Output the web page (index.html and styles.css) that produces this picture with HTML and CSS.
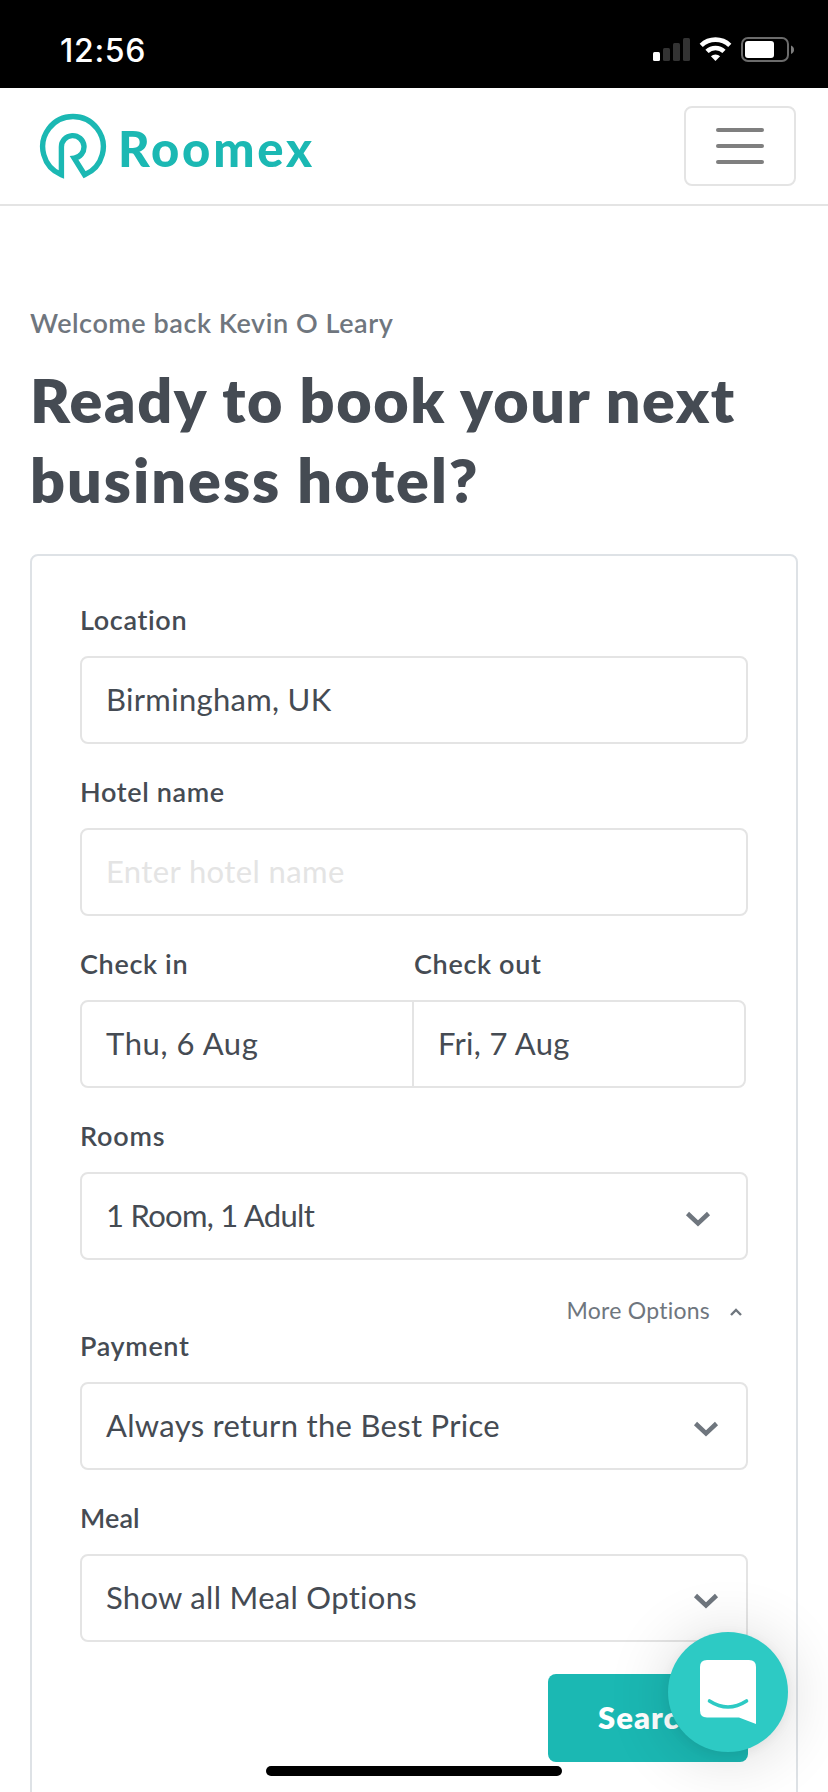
FILE: index.html
```html
<!DOCTYPE html>
<html lang="en">
<head>
<meta charset="utf-8">
<title>Roomex</title>
<link rel="stylesheet" href="styles.css">
</head>
<body>
<div class="status">
  <span class="clock">12:56</span>
  <svg class="status-icons" width="144" height="28" viewBox="0 0 144 28">
    <rect x="1" y="16" width="7" height="9" rx="1.5" fill="#fff"/>
    <g fill="#333"><rect x="11" y="12" width="7" height="13" rx="1.5"/><rect x="21" y="7" width="7" height="18" rx="1.5"/><rect x="31" y="2" width="7" height="23" rx="1.5"/></g>
    <g fill="none" stroke="#fff" stroke-width="4.6"><path d="M49.2 9.3a20.8 20.8 0 0 1 28.6 0"/><path d="M55 15.4a12.2 12.2 0 0 1 17 0"/></g>
    <path d="M63.5 25l-4.6-4.8a6.8 6.8 0 0 1 9.2 0z" fill="#fff"/>
    <rect x="90" y="2" width="46" height="23" rx="6" fill="none" stroke="#6b6b6b" stroke-width="2"/>
    <rect x="93" y="5" width="29" height="17" rx="3" fill="#fff"/>
    <path d="M139 9.5q3 1.2 3 4.200t-3 4.200z" fill="#7d7d7d"/>
  </svg>
</div>
<header class="nav">
  <div class="brand">
    <svg class="brand-mark" width="68" height="66" viewBox="0 0 68 66" fill="none" stroke="#1bb8b3" stroke-width="5.400"><path d="M22.400 61.800A30.300 30.300 0 1 1 45.600 61.800L35.200 45.100A11.300 11.300 0 1 0 22.400 34z"/></svg>
    <span class="brand-name">Roomex</span>
  </div>
  <button class="menu" aria-label="Menu"><i></i><i></i><i></i></button>
</header>
<main>
  <p class="welcome">Welcome back Kevin O Leary</p>
  <h1><span>Ready to book your next</span><br><span class="line2">business hotel?</span></h1>
  <form class="card">
    <div class="group"><label>Location</label><div class="field"><span>Birmingham, UK</span></div></div>
    <div class="group"><label>Hotel name</label><div class="field hint"><span>Enter hotel name</span></div></div>
    <div class="group">
      <div class="pair"><label>Check in</label><label>Check out</label></div>
      <div class="field dates"><span class="date">Thu, 6 Aug</span><span class="date t-out">Fri, 7 Aug</span></div>
    </div>
    <div class="group"><label class="t-rooms">Rooms</label><div class="field rooms"><span class="t-room">1 Room, 1 Adult</span><svg class="chev" width="24" height="14" viewBox="0 0 24 14"><path d="M1.500 1.500L12 11.500L22.500 1.500"/></svg></div></div>
    <div class="more"><span>More Options</span><svg width="12" height="8" viewBox="0 0 12 8"><path d="M1 7L6 2L11 7"/></svg></div>
    <div class="group"><label>Payment</label><div class="field"><span>Always return the Best Price</span><svg class="chev" width="24" height="14" viewBox="0 0 24 14"><path d="M1.500 1.500L12 11.500L22.500 1.500"/></svg></div></div>
    <div class="group"><label class="t-meal">Meal</label><div class="field"><span>Show all Meal Options</span><svg class="chev" width="24" height="14" viewBox="0 0 24 14"><path d="M1.500 1.500L12 11.500L22.500 1.500"/></svg></div></div>
    <div class="actions"><button class="search" type="button">Search</button></div>
  </form>
</main>
<div class="chat">
  <svg width="56" height="64" viewBox="0 0 56 64"><path d="M7 0H49Q56 0 56 7V64L39 57.500H7Q0 57.500 0 50.500V7Q0 0 7 0z" fill="#fff"/><path d="M9.500 41Q28 53 46.500 41" fill="none" stroke="#2dcac4" stroke-width="3.600" stroke-linecap="round"/></svg>
</div>
<div class="home-bar"></div>
</body>
</html>
```
FILE: styles.css
```css
* { box-sizing: border-box; }
body {
  position: relative;
  margin: 0;
  width: 828px;
  height: 1792px;
  overflow: hidden;
  background: #fff;
  color: #454b53;
  font-family: Lato, "Liberation Sans", sans-serif;
}
.status {
  display: flex;
  justify-content: space-between;
  align-items: flex-start;
  height: 88px;
  padding: 36px 32px 0 60px;
  background: #000;
  color: #fff;
}
.clock {
  font: 500 32px/29px Inter, sans-serif;
  letter-spacing: 0.7px;
}
.nav {
  display: flex;
  justify-content: space-between;
  align-items: center;
  height: 118px;
  padding: 0 32px 0 39px;
  border-bottom: 2px solid #e4e4e4;
}
.brand { display: flex; align-items: center; gap: 11px; color: #1bb8b3; }
.brand-name {
  padding-top: 3px;
  font: 900 49px/60px Lato, sans-serif;
  letter-spacing: 2.800px;
}
.menu {
  display: flex;
  flex-direction: column;
  align-items: center;
  justify-content: center;
  gap: 12px;
  width: 112px;
  height: 80px;
  padding: 0;
  border: 2px solid #e4e4e4;
  border-radius: 8px;
  background: #fff;
}
.menu i { width: 48px; height: 4px; border-radius: 2px; background: #7f7f7f; }
main { padding: 98px 30px 0; }
.welcome {
  margin: 0;
  color: #6f767e;
  font-size: 27px;
  font-weight: 600;
  line-height: 38px;
  letter-spacing: 0.550px;
}
h1 {
  margin: 18px 0 34px;
  font-size: 61px;
  font-weight: 800;
  line-height: 80px;
  letter-spacing: 1.560px;
  white-space: nowrap;
}
.line2 { letter-spacing: 2px; }
.card {
  height: 1300px;
  padding: 44px 48px;
  border: 2px solid #dee2e6;
  border-radius: 8px;
}
.group { margin-bottom: 28px; }
label {
  display: block;
  margin-bottom: 16px;
  font-size: 27px;
  font-weight: 600;
  line-height: 40px;
  letter-spacing: 0.650px;
}
.field {
  display: flex;
  align-items: center;
  justify-content: space-between;
  height: 88px;
  padding: 0 28px 0 24px;
  border: 2px solid #e4e4e4;
  border-radius: 8px;
  background: #fff;
  font-size: 31px;
  letter-spacing: 0.300px;
}
.field span { padding-bottom: 2px; }
.hint { color: #e4e4e4; letter-spacing: 0.400px; }
.rooms { padding-right: 36px; }
.pair { display: grid; grid-template-columns: 1fr 1fr; }
.dates { width: 666px; padding: 0; align-items: stretch; }
.date { display: flex; align-items: center; flex: 1; padding-left: 24px; letter-spacing: 0.600px; }
.date + .date { border-left: 2px solid #e4e4e4; }
.t-out { letter-spacing: 0.300px; }
.t-room { letter-spacing: -0.700px; }
.t-rooms { letter-spacing: 0.800px; }
.t-meal { letter-spacing: 0.100px; }
.chev { margin-top: 6px; overflow: visible; fill: none; stroke: #6f767e; stroke-width: 4.500; }
.more {
  display: flex;
  justify-content: flex-end;
  align-items: center;
  gap: 20px;
  height: 38px;
  padding: 5px 6px 0 0;
  color: #6f767e;
  font-size: 23px;
  letter-spacing: 0.250px;
}
.more svg { margin-top: 4px; overflow: visible; fill: none; stroke: #6f767e; stroke-width: 2.400; }
.actions { display: flex; justify-content: flex-end; margin-top: 32px; }
.search {
  width: 200px;
  height: 88px;
  padding: 0 0 2px 50px;
  border: 0;
  border-radius: 8px;
  background: #1bb8b3;
  color: #fff;
  text-align: left;
  font: 800 31px/86px Lato, sans-serif;
  letter-spacing: 1px;
}
.chat {
  position: absolute;
  left: 668px;
  top: 1632px;
  display: flex;
  width: 120px;
  height: 120px;
  padding: 28px 32px;
  border-radius: 50%;
  background: #2dcac4;
  box-shadow: 0 2px 12px rgba(0,0,0,.06), 0 4px 64px rgba(0,0,0,.16);
}
.home-bar {
  position: absolute;
  left: 266px;
  top: 1766px;
  width: 296px;
  height: 10px;
  border-radius: 5px;
  background: #000;
}
```
